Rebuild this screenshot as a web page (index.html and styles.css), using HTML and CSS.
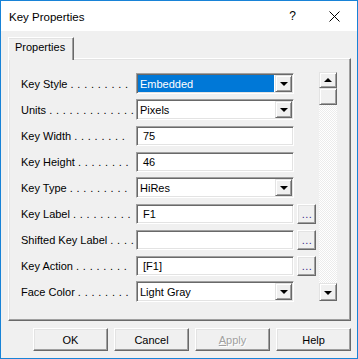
FILE: index.html
```html
<!DOCTYPE html>
<html lang="en">
<head>
  <meta charset="UTF-8" />
  <title>Key Properties</title>
  <link rel="stylesheet" href="styles.css">
</head>
<body>

<div class="window">
  <div class="titlebar">
    <span class="title">Key Properties</span>
    <span class="help-q">?</span>
    <svg class="close-x" width="11" height="11" viewBox="0 0 11 11">
      <path d="M0.5 0.5 L10.5 10.5 M10.5 0.5 L0.5 10.5" stroke="#000" stroke-width="1" fill="none"/>
    </svg>
  </div>

  <div class="client">
    <div class="tabs">
      <div class="tab">Properties</div>
    </div>

    <div class="panel">
      <div class="rows">
        <div class="row">
          <span class="label">Key Style <span class="dots">. . . . . . . . .</span></span>
          <div class="field combo">
            <span class="value selected">Embedded</span>
            <span class="drop"><i class="arrow"></i></span>
          </div>
        </div>
        <div class="row">
          <span class="label">Units <span class="dots">. . . . . . . . . . . . .</span></span>
          <div class="field combo">
            <span class="value">Pixels</span>
            <span class="drop"><i class="arrow"></i></span>
          </div>
        </div>
        <div class="row">
          <span class="label">Key Width <span class="dots">. . . . . . . .</span></span>
          <div class="field edit"><span class="value">75</span></div>
        </div>
        <div class="row">
          <span class="label">Key Height <span class="dots">. . . . . . . .</span></span>
          <div class="field edit"><span class="value">46</span></div>
        </div>
        <div class="row">
          <span class="label">Key Type <span class="dots">. . . . . . . . .</span></span>
          <div class="field combo">
            <span class="value">HiRes</span>
            <span class="drop"><i class="arrow"></i></span>
          </div>
        </div>
        <div class="row">
          <span class="label">Key Label <span class="dots">. . . . . . . . .</span></span>
          <div class="field edit short"><span class="value">F1</span></div>
          <button class="more">...</button>
        </div>
        <div class="row">
          <span class="label">Shifted Key Label <span class="dots">. . . .</span></span>
          <div class="field edit short"><span class="value"></span></div>
          <button class="more">...</button>
        </div>
        <div class="row">
          <span class="label">Key Action <span class="dots">. . . . . . . .</span></span>
          <div class="field edit short"><span class="value">[F1]</span></div>
          <button class="more">...</button>
        </div>
        <div class="row">
          <span class="label">Face Color <span class="dots">. . . . . . . .</span></span>
          <div class="field combo">
            <span class="value">Light Gray</span>
            <span class="drop"><i class="arrow"></i></span>
          </div>
        </div>
      </div>

      <div class="scrollbar">
        <span class="sb-btn"><i class="arrow up"></i></span>
        <span class="sb-thumb"></span>
        <span class="sb-track"></span>
        <span class="sb-btn"><i class="arrow"></i></span>
      </div>
    </div>

    <div class="actions">
      <button class="btn">OK</button>
      <button class="btn">Cancel</button>
      <button class="btn disabled"><u>A</u>pply</button>
      <button class="btn">Help</button>
    </div>
  </div>
</div>

</body>
</html>
```

FILE: styles.css
```css
body {
  margin: 0;
  background: #fff;
  font-family: 'Liberation Sans', Arial, sans-serif;
  font-size: 11px;
  color: #000;
}

.window {
  width: 358px;
  height: 359px;
  box-sizing: border-box;
  border: 1px solid #1883d7;
  display: flex;
  flex-direction: column;
}

.titlebar {
  height: 30px;
  background: #fff;
  display: flex;
  align-items: center;
  padding-left: 8px;
}

.title {
  font-size: 11.5px;
  flex: 1;
  margin-top: 1px;
}

.help-q {
  font-size: 12px;
  margin-right: 33px;
}

.close-x {
  margin-right: 17px;
}

.client {
  flex: 1;
  background: #f0f0f0;
  padding: 6px 6px 0 7px;
}

/* tab strip */
.tabs {
  display: flex;
  height: 21px;
}

.tab {
  width: 58px;
  padding: 3px 0 0 6px;
  border-top: 1px solid #fff;
  border-left: 1px solid #fff;
  border-right: 1px solid #696969;
  box-shadow: inset -1px 0 #a0a0a0, inset 0 1px #e3e3e3;
  position: relative;
  z-index: 1;
  background: #f0f0f0;
  height: 19px;
  margin-bottom: -1px;
}

.panel {
  height: 263px;
  box-sizing: border-box;
  border-top: 1px solid #fff;
  border-left: 1px solid #fff;
  border-right: 1px solid #696969;
  border-bottom: 1px solid #696969;
  box-shadow: inset -1px -1px #a0a0a0, inset 1px 1px #e3e3e3;
  display: flex;
  padding: 13px 0 0 12px;
}

.rows {
  display: flex;
  flex-direction: column;
  gap: 5px;
  margin-top: 1px;
}

.row {
  display: flex;
  align-items: center;
  height: 21px;
}

.label {
  width: 115px;
  white-space: nowrap;
}

.dots {
  letter-spacing: 0.35px;
}

/* sunken 3D fields */
.field {
  width: 158px;
  height: 21px;
  box-sizing: border-box;
  background: #fff;
  border-top: 1px solid #a0a0a0;
  border-left: 1px solid #a0a0a0;
  border-right: 1px solid #fff;
  border-bottom: 1px solid #fff;
  box-shadow: inset 1px 1px #696969, inset -1px -1px #e3e3e3;
  display: flex;
  align-items: stretch;
  padding: 1px;
}

.field.edit {
  height: 20px;
}

.field.short {
  margin-right: 3px;
}

.value {
  flex: 1;
  display: flex;
  align-items: center;
  padding-left: 2px;
  white-space: nowrap;
}

.edit .value {
  padding-left: 5px;
}

.value.selected {
  background: #0078d7;
  color: #fff;
  margin-right: 1px;
}

.drop {
  width: 17px;
  box-sizing: border-box;
  background: #f0f0f0;
  border-top: 1px solid #e3e3e3;
  border-left: 1px solid #e3e3e3;
  border-right: 1px solid #696969;
  border-bottom: 1px solid #696969;
  box-shadow: inset 1px 1px #fff, inset -1px -1px #a0a0a0;
  display: flex;
  align-items: center;
  justify-content: center;
}

.arrow {
  width: 0;
  height: 0;
  border-left: 4px solid transparent;
  border-right: 4px solid transparent;
  border-top: 4px solid #000;
  margin-top: 1px;
}

.arrow.up {
  border-top: none;
  border-bottom: 4px solid #000;
  margin-top: -1px;
}

button {
  font-family: inherit;
  font-size: 11px;
  color: #000;
  background: #f0f0f0;
  padding: 0;
  box-sizing: border-box;
  border-top: 1px solid #fff;
  border-left: 1px solid #fff;
  border-right: 1px solid #696969;
  border-bottom: 1px solid #696969;
  box-shadow: inset -1px -1px #a0a0a0, inset 1px 1px #e3e3e3;
}

.more {
  width: 19px;
  height: 20px;
  color: #3a2a8a;
  letter-spacing: 0.5px;
  line-height: 14px;
  padding-left: 1px;
}

/* scrollbar */
.scrollbar {
  width: 18px;
  margin-left: 3px;
  display: flex;
  flex-direction: column;
  height: 229px;
}

.sb-btn,
.sb-thumb {
  box-sizing: border-box;
  background: #f0f0f0;
  border-top: 1px solid #e3e3e3;
  border-left: 1px solid #e3e3e3;
  border-right: 1px solid #696969;
  border-bottom: 1px solid #696969;
  box-shadow: inset 1px 1px #fff, inset -1px -1px #a0a0a0;
  display: flex;
  align-items: center;
  justify-content: center;
}

.sb-btn {
  height: 16px;
}

.sb-thumb {
  height: 17px;
}

.sb-track {
  flex: 1;
  background-color: #fff;
  background-image: conic-gradient(#fff 25%, #ececec 0 50%, #fff 0 75%, #ececec 0);
  background-size: 2px 2px;
}

.scrollbar .sb-btn:last-child {
  height: 18px;
}

/* dialog buttons */
.actions {
  display: flex;
  justify-content: flex-end;
  gap: 6px;
  margin-top: 7px;
}

.btn {
  width: 75px;
  height: 23px;
}

.btn.disabled {
  color: #a0a0a0;
  text-shadow: 1px 1px #fff;
}
```
